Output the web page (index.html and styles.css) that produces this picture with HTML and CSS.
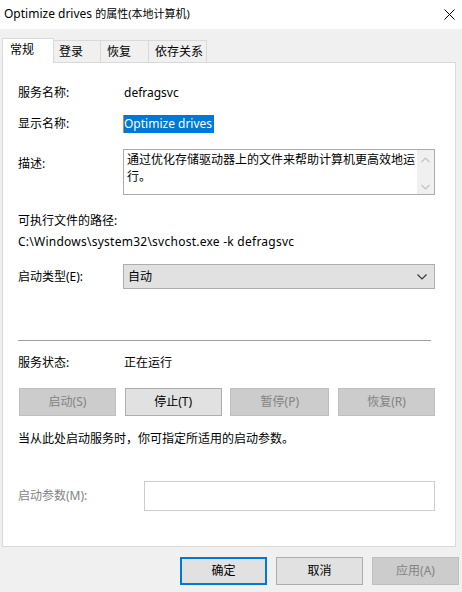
FILE: index.html
```html
<!DOCTYPE html>
<html lang="zh-CN">
  <head>
    <meta charset="UTF-8" />
    <title>Optimize drives 的属性(本地计算机)</title>
    <link rel="stylesheet" href="styles.css">
  </head>
  <body>
    <div class="window">
      <div class="titlebar">
        <span class="title">Optimize drives <span class="title-cjk">的属性(本地计算机)</span></span>
        <svg class="close" width="11" height="11" viewBox="0 0 11 11">
          <path d="M0.5 0.5 L10.5 10.5 M10.5 0.5 L0.5 10.5" stroke="#000" stroke-width="1" fill="none" />
        </svg>
      </div>

      <div class="tabs">
        <div class="tab active tab-general">常规</div>
        <div class="tab tab-logon">登录</div>
        <div class="tab tab-recovery">恢复</div>
        <div class="tab tab-deps">依存关系</div>
      </div>

      <div class="panel">
        <div class="row r-name">
          <div class="label">服务名称:</div>
          <div class="value">defragsvc</div>
        </div>

        <div class="row r-display">
          <div class="label">显示名称:</div>
          <div class="value"><span class="selected">Optimize drives</span></div>
        </div>

        <div class="row r-desc">
          <div class="label">描述:</div>
          <div class="desc-box">
            <div class="desc-text">通过优化存储驱动器上的文件来帮助计算机更高效地运<br>行。</div>
            <div class="scrollbar">
              <svg width="9" height="6" viewBox="0 0 9 6"><path d="M0.5 5 L4.5 1 L8.5 5" stroke="#c2c2c2" stroke-width="1.2" fill="none" /></svg>
              <svg width="9" height="6" viewBox="0 0 9 6"><path d="M0.5 1 L4.5 5 L8.5 1" stroke="#c2c2c2" stroke-width="1.2" fill="none" /></svg>
            </div>
          </div>
        </div>

        <div class="line r-path-label">可执行文件的路径:</div>
        <div class="line r-path">C:\Windows\system32\svchost.exe -k defragsvc</div>

        <div class="row r-start">
          <div class="label">启动类型(E):</div>
          <div class="combo">
            <span>自动</span>
            <svg width="10" height="6" viewBox="0 0 10 6"><path d="M0.5 0.5 L5 5 L9.5 0.5" stroke="#333" stroke-width="1.1" fill="none" /></svg>
          </div>
        </div>

        <div class="separator"></div>

        <div class="row r-status">
          <div class="label">服务状态:</div>
          <div class="value">正在运行</div>
        </div>

        <div class="service-buttons">
          <button class="btn disabled w97">启动(S)</button>
          <button class="btn w97">停止(T)</button>
          <button class="btn disabled w99">暂停(P)</button>
          <button class="btn disabled w97">恢复(R)</button>
        </div>

        <div class="line r-help">当从此处启动服务时，你可指定所适用的启动参数。</div>

        <div class="row r-param">
          <div class="label label-wide muted">启动参数(M):</div>
          <div class="param-input"></div>
        </div>
      </div>

      <div class="footer">
        <button class="btn dialog default">确定</button>
        <button class="btn dialog">取消</button>
        <button class="btn dialog disabled">应用(A)</button>
      </div>
    </div>
  </body>
</html>
```

FILE: styles.css
```css
body {
  margin: 0;
  background-color: #f0f0f0;
  font-family: "Noto Sans", "Noto Sans CJK SC", sans-serif;
  font-size: 12px;
  color: #000;
}

.window {
  width: 462px;
  height: 592px;
  overflow: hidden;
}

/* title bar */
.titlebar {
  height: 29px;
  background-color: #fff;
  display: flex;
  align-items: center;
  justify-content: space-between;
  padding: 0 7px 0 4px;
}

.title {
  line-height: 18px;
  margin-top: -1px;
}

.title-cjk {
  font-size: 11px;
}

.close {
  display: block;
  margin-top: -1px;
}

/* tabs */
.tabs {
  display: flex;
  align-items: flex-end;
  height: 24px;
  margin-top: 9px;
  padding-left: 2px;
  position: relative;
  z-index: 1;
}

.tab {
  box-sizing: border-box;
  height: 22px;
  border: 1px solid #d9d9d9;
  border-bottom: none;
  background-color: #f0f0f0;
  line-height: 18px;
  padding: 2px 0 0 6px;
  margin-left: -1px;
}

.tab.active {
  height: 25px;
  margin-left: 0;
  margin-bottom: -1px;
  background-color: #fff;
  padding: 2px 0 0 7px;
  position: relative;
  z-index: 2;
}

.tab-general { width: 52px; }
.tab-logon { width: 48px; padding-left: 5px; }
.tab-recovery { width: 49px; }
.tab-deps { width: 59px; }

/* main panel */
.panel {
  box-sizing: border-box;
  width: 454px;
  height: 485px;
  margin-left: 2px;
  padding-left: 15px;
  border: 1px solid #d9d9d9;
  background-color: #fff;
  display: flex;
  flex-direction: column;
}

.row {
  display: flex;
  align-items: center;
}

.label {
  width: 105px;
  flex-shrink: 0;
  line-height: 18px;
}

.label-wide {
  width: 126px;
}

.muted {
  color: #838383;
}

.value {
  line-height: 18px;
  padding-left: 1px;
}

.line {
  height: 18px;
  line-height: 18px;
}

.r-name { margin-top: 21px; height: 18px; }
.r-display { margin-top: 13px; height: 18px; }
.r-desc { margin-top: 16px; align-items: flex-start; }
.r-desc .label { padding-top: 6px; }
.r-path-label { margin-top: 17px; }
.r-path { margin-top: 3px; letter-spacing: 0.25px; }
.r-start { margin-top: 13px; }
.r-status { margin-top: 13px; height: 18px; }
.r-help { margin-top: 14px; }
.r-param { margin-top: 33px; }

.selected {
  display: inline-block;
  height: 18px;
  line-height: 18px;
  background-color: #0078d7;
  color: #fff;
  border-left: 1px solid #e8822a;
  margin-left: -1px;
  padding-right: 2px;
}

.desc-box {
  box-sizing: border-box;
  width: 312px;
  height: 46px;
  border: 1px solid #ababab;
  display: flex;
}

.desc-text {
  flex: 1;
  padding: 1px 0 0 3px;
  line-height: 17px;
  white-space: nowrap;
  overflow: hidden;
}

.scrollbar {
  width: 17px;
  background-color: #f0f0f0;
  display: flex;
  flex-direction: column;
  justify-content: space-between;
  align-items: center;
  padding: 7px 0 4px;
}

.scrollbar svg {
  display: block;
}

.combo {
  box-sizing: border-box;
  width: 312px;
  height: 25px;
  border: 1px solid #adadad;
  background-color: #e1e1e1;
  display: flex;
  align-items: center;
  justify-content: space-between;
  padding: 0 4px 0 4px;
  line-height: 18px;
}

.combo svg {
  display: block;
  margin-right: 3px;
}

.separator {
  margin-top: 51px;
  width: 413px;
  height: 1px;
  background-color: #a0a0a0;
}

/* buttons */
.btn {
  box-sizing: border-box;
  height: 28px;
  border: 1px solid #adadad;
  background-color: #e1e1e1;
  color: #000;
  font-family: inherit;
  font-size: 12px;
  line-height: 18px;
  padding: 0;
  margin: 0;
}

.btn.disabled {
  background-color: #cccccc;
  border-color: #bfbfbf;
  color: #838383;
}

.service-buttons {
  margin-top: 16px;
  margin-left: 1px;
  width: 416px;
  display: flex;
  justify-content: space-between;
}

.w97 { width: 97px; }
.w99 { width: 99px; }

.param-input {
  box-sizing: border-box;
  width: 291px;
  height: 30px;
  border: 1px solid #cccccc;
  background-color: #fff;
}

.footer {
  margin-top: 10px;
  padding-right: 3px;
  display: flex;
  justify-content: flex-end;
  gap: 9px;
}

.btn.dialog {
  width: 87px;
}

.btn.default {
  border: 2px solid #0078d7;
}
```
